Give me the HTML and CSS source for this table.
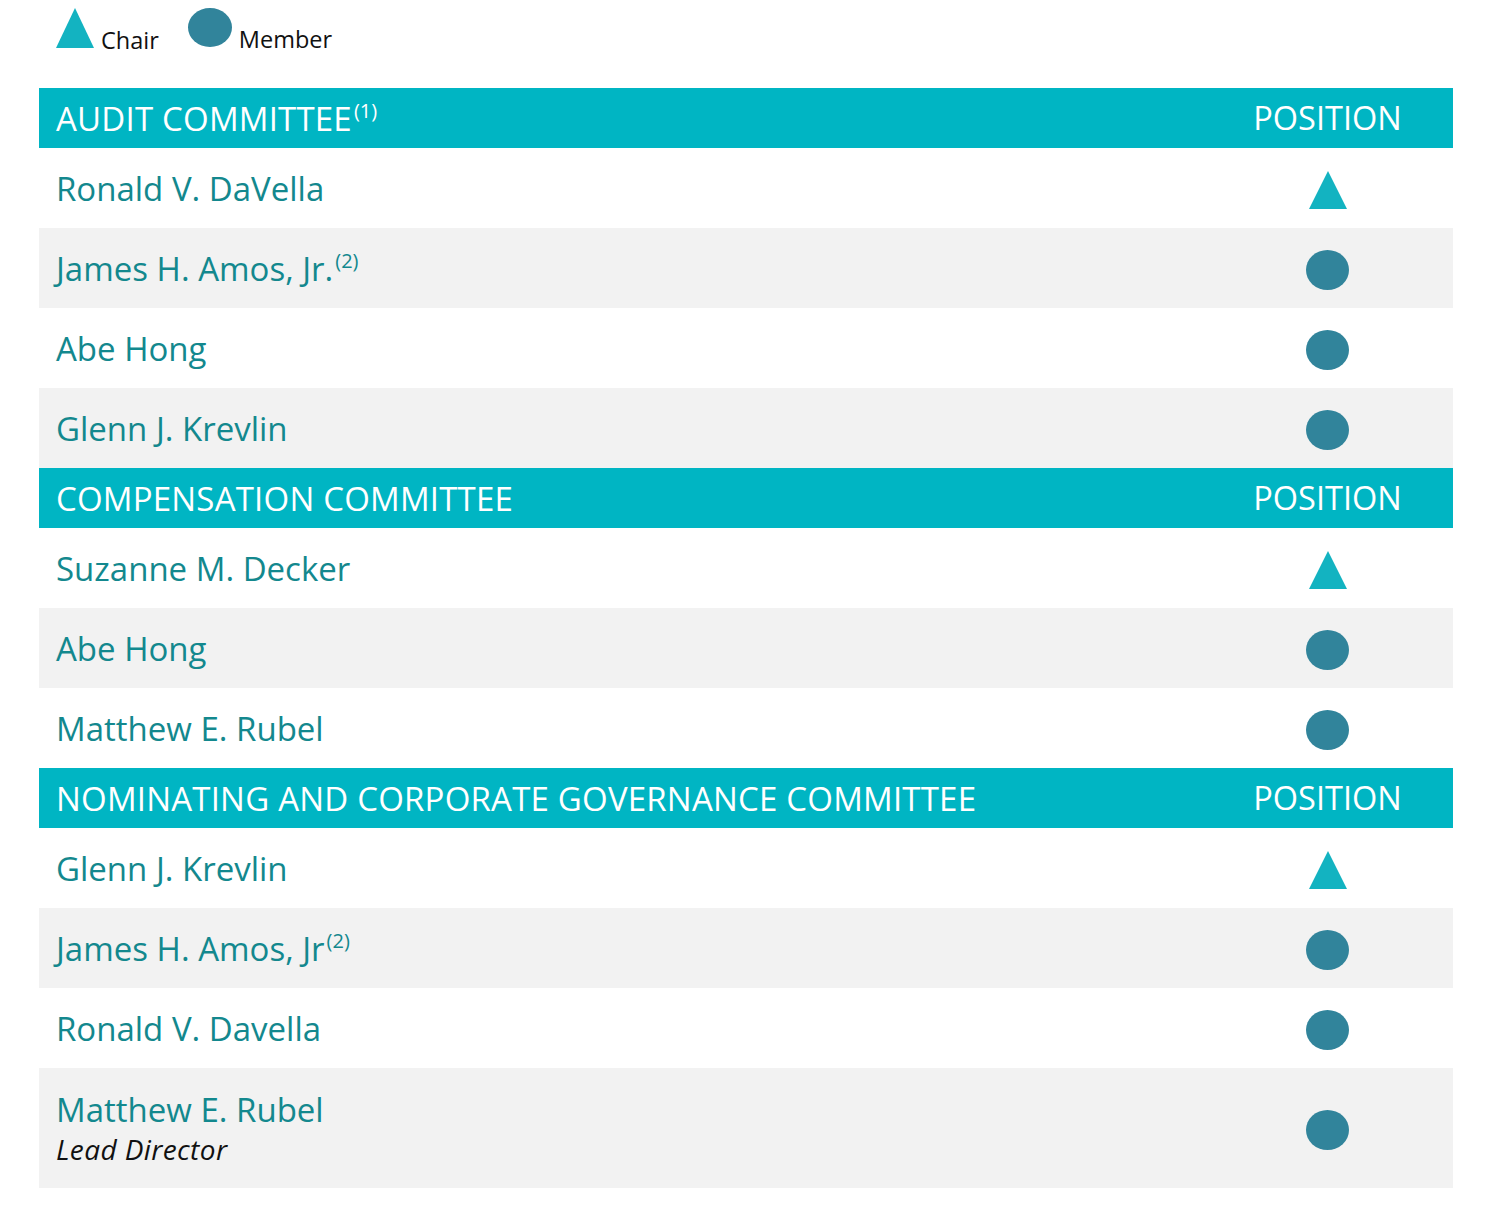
FILE: index.html
```html
<!DOCTYPE html>
<html lang="en">
<head>
<meta charset="utf-8">
<title>Committees</title>
<link rel="stylesheet" href="styles.css">
</head>
<body>
<div class="legend">
  <span class="legend-item">
    <svg class="lg-tri" width="38" height="40" viewBox="0 0 38 40"><polygon points="19,0 38,40 0,40" fill="#13b3c1"/></svg>
    <span class="legend-label">Chair</span>
  </span>
  <span class="legend-item">
    <svg class="lg-dot" width="44" height="39" viewBox="0 0 44 39"><ellipse cx="22" cy="19.5" rx="22" ry="19.5" fill="#31849b"/></svg>
    <span class="legend-label">Member</span>
  </span>
</div>

<div class="table">
  <div class="row head"><div class="name">AUDIT COMMITTEE<sup>(1)</sup></div><div class="pos">POSITION</div></div>
  <div class="row"><div class="name">Ronald V. DaVella</div><div class="pos"><svg class="tri" width="38" height="38" viewBox="0 0 38 38"><polygon points="19,0 38,38 0,38" fill="#13b3c1"/></svg></div></div>
  <div class="row alt"><div class="name">James H. Amos, Jr.<sup>(2)</sup></div><div class="pos"><svg class="dot" width="43" height="40" viewBox="0 0 43 40"><ellipse cx="21.5" cy="20" rx="21.5" ry="20" fill="#31849b"/></svg></div></div>
  <div class="row"><div class="name">Abe Hong</div><div class="pos"><svg class="dot" width="43" height="40" viewBox="0 0 43 40"><ellipse cx="21.5" cy="20" rx="21.5" ry="20" fill="#31849b"/></svg></div></div>
  <div class="row alt"><div class="name">Glenn J. Krevlin</div><div class="pos"><svg class="dot" width="43" height="40" viewBox="0 0 43 40"><ellipse cx="21.5" cy="20" rx="21.5" ry="20" fill="#31849b"/></svg></div></div>

  <div class="row head"><div class="name">COMPENSATION COMMITTEE</div><div class="pos">POSITION</div></div>
  <div class="row"><div class="name">Suzanne M. Decker</div><div class="pos"><svg class="tri" width="38" height="38" viewBox="0 0 38 38"><polygon points="19,0 38,38 0,38" fill="#13b3c1"/></svg></div></div>
  <div class="row alt"><div class="name">Abe Hong</div><div class="pos"><svg class="dot" width="43" height="40" viewBox="0 0 43 40"><ellipse cx="21.5" cy="20" rx="21.5" ry="20" fill="#31849b"/></svg></div></div>
  <div class="row"><div class="name">Matthew E. Rubel</div><div class="pos"><svg class="dot" width="43" height="40" viewBox="0 0 43 40"><ellipse cx="21.5" cy="20" rx="21.5" ry="20" fill="#31849b"/></svg></div></div>

  <div class="row head"><div class="name">NOMINATING AND CORPORATE GOVERNANCE COMMITTEE</div><div class="pos">POSITION</div></div>
  <div class="row"><div class="name">Glenn J. Krevlin</div><div class="pos"><svg class="tri" width="38" height="38" viewBox="0 0 38 38"><polygon points="19,0 38,38 0,38" fill="#13b3c1"/></svg></div></div>
  <div class="row alt"><div class="name">James H. Amos, Jr<sup>(2)</sup></div><div class="pos"><svg class="dot" width="43" height="40" viewBox="0 0 43 40"><ellipse cx="21.5" cy="20" rx="21.5" ry="20" fill="#31849b"/></svg></div></div>
  <div class="row"><div class="name">Ronald V. Davella</div><div class="pos"><svg class="dot" width="43" height="40" viewBox="0 0 43 40"><ellipse cx="21.5" cy="20" rx="21.5" ry="20" fill="#31849b"/></svg></div></div>
  <div class="row alt tall"><div class="name">Matthew E. Rubel<span class="role">Lead Director</span></div><div class="pos"><svg class="dot" width="43" height="40" viewBox="0 0 43 40"><ellipse cx="21.5" cy="20" rx="21.5" ry="20" fill="#31849b"/></svg></div></div>
</div>
</body>
</html>
```

FILE: styles.css
```css
html, body {
  margin: 0;
  padding: 0;
  background: #ffffff;
}

body {
  font-family: "Open Sans", "Noto Sans", "DejaVu Sans", sans-serif;
  padding: 8px 39px 0 39px;
}

.legend {
  display: flex;
  align-items: flex-start;
  gap: 29px;
  height: 80px;
  padding-left: 17px;
}

.legend-item {
  display: flex;
  align-items: flex-end;
  gap: 7px;
}

.legend-item svg {
  display: block;
}

.legend-label {
  font-size: 23.5px;
  line-height: 1;
  color: #111111;
  position: relative;
  top: 4px;
}

.table {
  display: flex;
  flex-direction: column;
  width: 1414px;
}

.row {
  display: grid;
  grid-template-columns: 1fr 251px;
  align-items: center;
  height: 80px;
  background: #ffffff;
  color: #13888e;
}

.row.alt {
  background: #f2f2f2;
}

.row.head {
  height: 60px;
  background: #00b5c3;
  color: #ffffff;
}

.row.tall {
  height: 120px;
}

.name {
  padding-left: 17px;
  font-size: 33px;
  line-height: 1;
  white-space: nowrap;
}

.head .name {
  font-size: 33px;
  letter-spacing: 0.2px;
}

.head .pos {
  font-size: 32.5px;
}

.pos {
  display: flex;
  justify-content: center;
  align-items: center;
  line-height: 1;
}

.pos svg {
  display: block;
  margin-top: 3px;
}

sup {
  font-size: 20px;
  line-height: 0;
  vertical-align: 13px;
  margin-left: 2px;
  letter-spacing: 0;
}

.role {
  display: block;
  margin-top: 9px;
  font-size: 28px;
  font-style: italic;
  letter-spacing: 0.4px;
  color: #111111;
}
```
